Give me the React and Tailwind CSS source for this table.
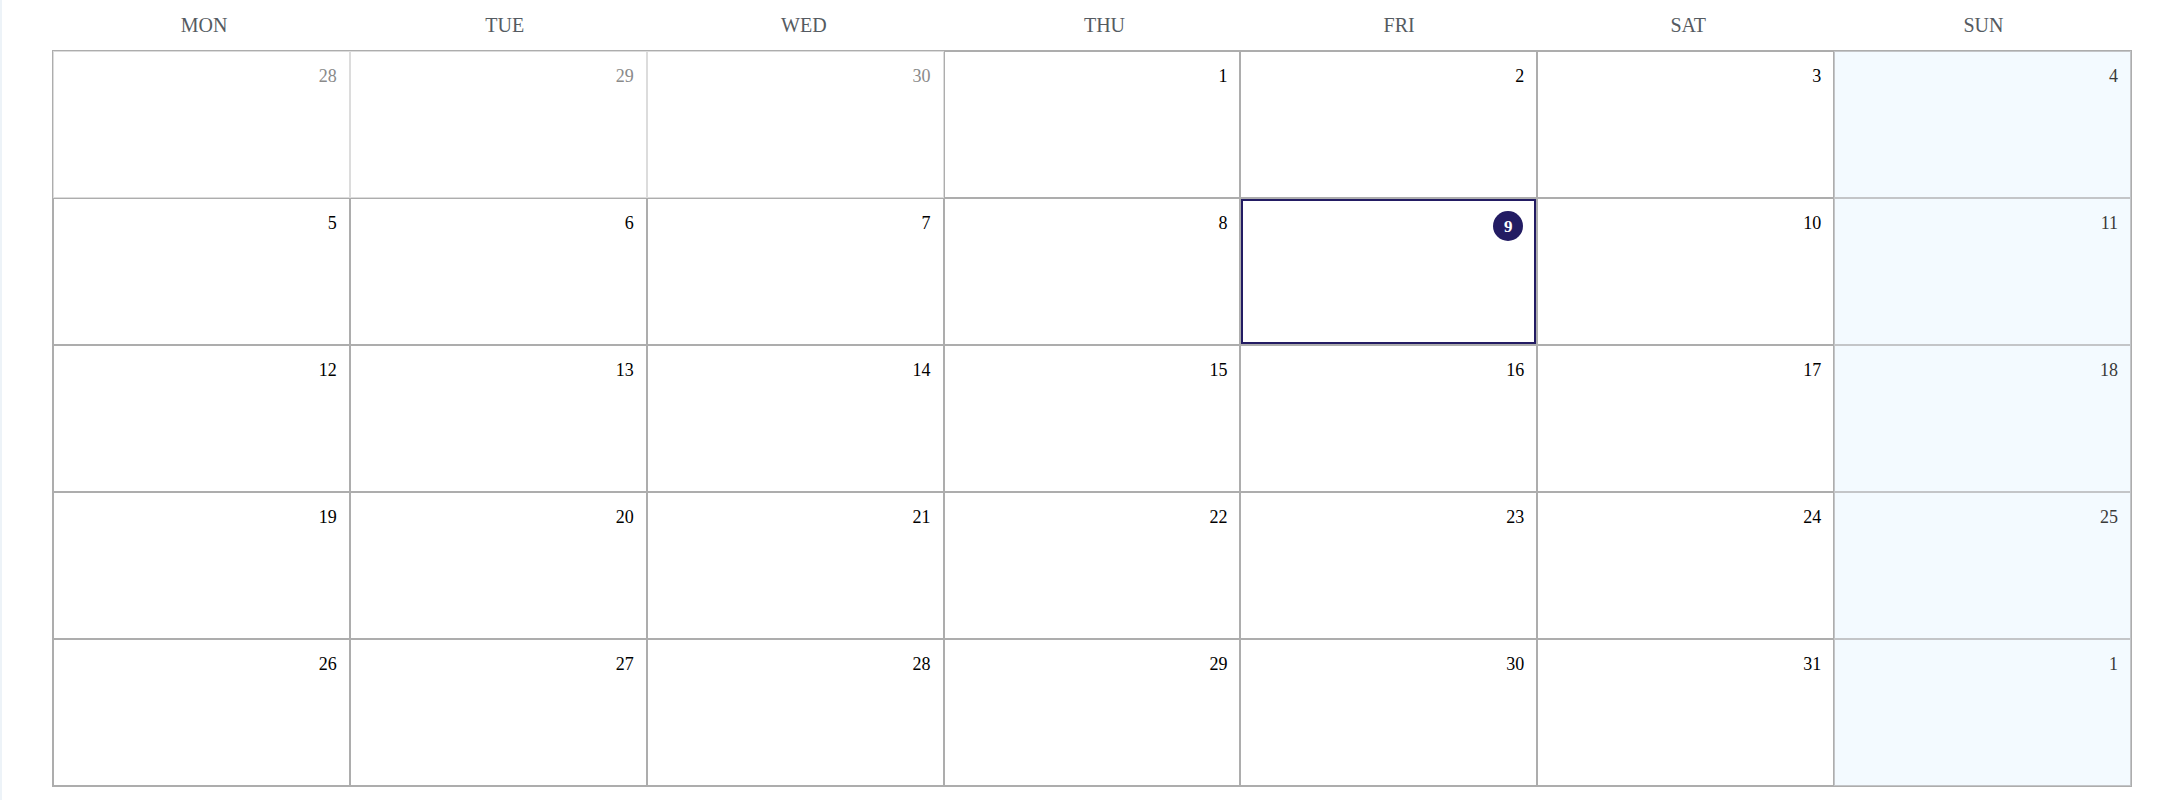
const DAYS = [
  { name: "MON", pad: "pl-[7px]" },
  { name: "TUE", pad: "pl-[14px]" },
  { name: "WED", pad: "pl-[18px]" },
  { name: "THU", pad: "pl-[25px]" },
  { name: "FRI", pad: "pl-[20px]" },
  { name: "SAT", pad: "pl-[4px]" },
  { name: "SUN", pad: "pl-0" },
]

function buildCells() {
  const cells = []
  ;[28, 29, 30].forEach((d) => cells.push({ day: d, kind: "prev" }))
  for (let d = 1; d <= 31; d++) cells.push({ day: d, kind: "cur" })
  cells.push({ day: 1, kind: "next" })
  return cells
}

function DayCell({ cell, index }) {
  const isSunday = index % 7 === 6
  const isToday = cell.kind === "cur" && cell.day === 9

  let box = "border-[#adadad] bg-white"
  let text = "text-black"
  if (cell.kind === "prev") {
    box = "border-[#dcdcdc] bg-white"
    text = "text-[#8a8a8a]"
  } else if (isSunday) {
    box = "border-[#c3c5c8] bg-[#f3faff]"
    text = "text-[#3a3a3a]"
  }

  return (
    <div
      className={`h-[147px] border pt-[11px] pr-[12px] flex justify-end items-start ${box} ${
        isToday ? "shadow-[inset_0_0_0_2px_#231c63]" : ""
      }`}
    >
      {isToday ? (
        <span className="mt-[1px] mr-[1px] w-[30px] h-[30px] rounded-full bg-[#231c63] text-white text-[17px] font-bold flex items-center justify-center leading-none">
          {cell.day}
        </span>
      ) : (
        <span className={`text-[18px] ${text}`}>{cell.day}</span>
      )}
    </div>
  )
}

export default function App() {
  const cells = buildCells()

  return (
    <div className="w-[2184px] h-[800px] bg-white flex font-['Liberation_Serif',serif]">
      <div className="w-[2px] h-full bg-[#edf3f8]" />
      <div className="pl-[50px]">
        {/* Weekday header */}
        <div className="w-[2080px] h-[50px] grid grid-cols-7">
          {DAYS.map((d) => (
            <div
              key={d.name}
              className={`flex items-center justify-center text-[20px] text-[#555b61] ${d.pad}`}
            >
              {d.name}
            </div>
          ))}
        </div>

        {/* Month grid */}
        <div className="w-[2080px] grid grid-cols-7 border border-[#adadad]">
          {cells.map((c, i) => (
            <DayCell key={i} cell={c} index={i} />
          ))}
        </div>
      </div>
    </div>
  )
}
